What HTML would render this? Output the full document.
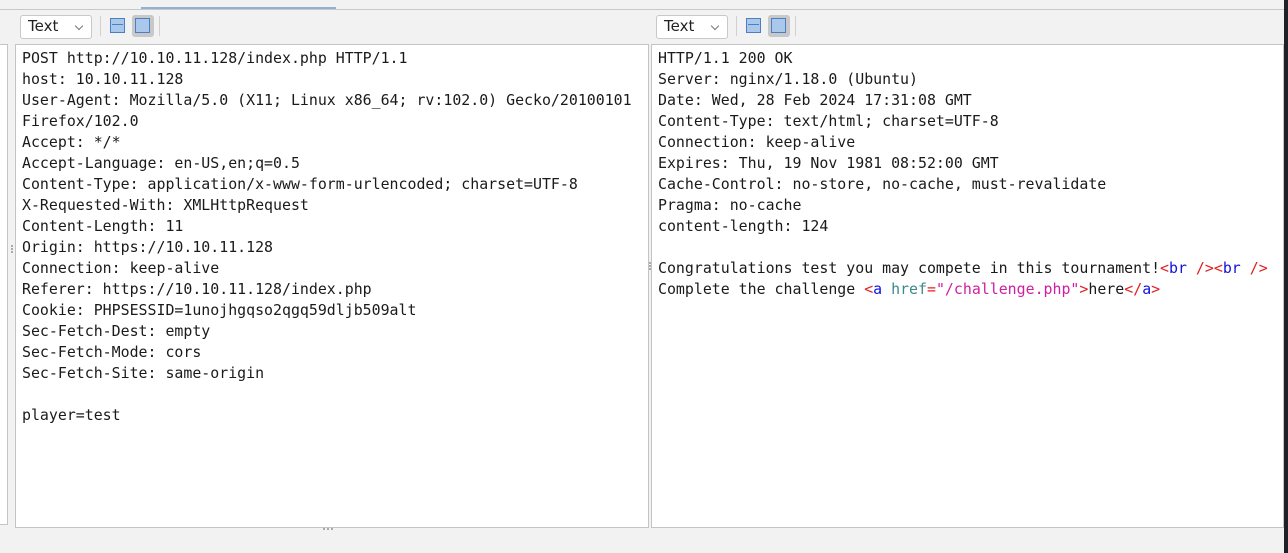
<!DOCTYPE html>
<html><head><style>
body{margin:0;width:1288px;height:553px;background:#f2f2f2;position:relative;overflow:hidden;font-family:"DejaVu Sans Mono","Liberation Mono",monospace;}
.abs{position:absolute}
.ed{position:absolute;top:44px;background:#fff;border:1px solid #c4c4c4;box-sizing:border-box}
pre{margin:0;font-family:"DejaVu Sans Mono","Liberation Mono",monospace;font-size:14.9px;line-height:21px;color:#1a1a1a;position:absolute;top:48px}
.sel{position:absolute;top:15px;width:72px;height:24px;background:#fff;border:1px solid #c8c8c8;border-radius:3px;box-sizing:border-box;font-family:"DejaVu Sans","Liberation Sans",sans-serif;font-size:15px;color:#222;padding:1px 0 0 7px}
.sel:after{content:"";position:absolute;right:9px;top:7px;width:5px;height:5px;border-right:1px solid #777;border-bottom:1px solid #777;transform:rotate(45deg)}
.sep{position:absolute;top:16px;width:1px;height:20px;background:#d0d0d0}
.ic{position:absolute;top:18px;width:15px;height:15px;border:1px solid #4a7fc0;background:#a9c8ec;box-sizing:border-box}
.hl{position:absolute;top:15px;width:22px;height:22px;background:#c8c8c8;border-radius:3px}
.t{color:#e02020}.n{color:#1010e0}.a{color:#3a8a8a}.v{color:#d020a0}
.dots{position:absolute;width:2px;height:2px;background:#aaa;box-shadow:0 3px 0 #aaa,0 6px 0 #aaa}
</style></head><body>
<div class="abs" style="left:0;top:9px;width:1284px;height:1px;background:#c8c8c8"></div>
<div class="abs" style="left:141px;top:7px;width:195px;height:2px;background:#8fb2d8"></div>
<div class="abs" style="left:1284px;top:0;width:4px;height:553px;background:#1e2127"></div>

<div class="sel" style="left:20px">Text</div>
<div class="sep" style="left:100px"></div>
<div class="ic" style="left:110px"><div style="position:absolute;left:1px;right:1px;top:5px;height:1px;background:#4a7fc0"></div></div>
<div class="hl" style="left:132px"></div>
<div class="ic" style="left:135px"></div>
<div class="sep" style="left:159px"></div>

<div class="sel" style="left:656px">Text</div>
<div class="sep" style="left:736px"></div>
<div class="ic" style="left:746px"><div style="position:absolute;left:1px;right:1px;top:5px;height:1px;background:#4a7fc0"></div></div>
<div class="hl" style="left:768px"></div>
<div class="ic" style="left:771px"></div>
<div class="sep" style="left:795px"></div>

<div class="ed" style="left:-2px;width:10px;height:481px"></div>
<div class="ed" style="left:15px;width:634px;height:484px"></div>
<div class="ed" style="left:651px;width:633px;height:484px"></div>
<div class="dots" style="left:11px;top:245px"></div>
<div class="dots" style="left:649px;top:262px"></div>
<div class="abs" style="left:323px;top:528px;width:2px;height:2px;background:#aaa;box-shadow:4px 0 0 #aaa,8px 0 0 #aaa"></div>

<pre style="left:22px">POST http://10.10.11.128/index.php HTTP/1.1
host: 10.10.11.128
User-Agent: Mozilla/5.0 (X11; Linux x86_64; rv:102.0) Gecko/20100101
Firefox/102.0
Accept: */*
Accept-Language: en-US,en;q=0.5
Content-Type: application/x-www-form-urlencoded; charset=UTF-8
X-Requested-With: XMLHttpRequest
Content-Length: 11
Origin: https://10.10.11.128
Connection: keep-alive
Referer: https://10.10.11.128/index.php
Cookie: PHPSESSID=1unojhgqso2qgq59dljb509alt
Sec-Fetch-Dest: empty
Sec-Fetch-Mode: cors
Sec-Fetch-Site: same-origin

player=test</pre>
<pre style="left:658px">HTTP/1.1 200 OK
Server: nginx/1.18.0 (Ubuntu)
Date: Wed, 28 Feb 2024 17:31:08 GMT
Content-Type: text/html; charset=UTF-8
Connection: keep-alive
Expires: Thu, 19 Nov 1981 08:52:00 GMT
Cache-Control: no-store, no-cache, must-revalidate
Pragma: no-cache
content-length: 124

Congratulations test you may compete in this tournament!<span class="t">&lt;</span><span class="n">br</span> <span class="t">/&gt;&lt;</span><span class="n">br</span> <span class="t">/&gt;</span>
Complete the challenge <span class="t">&lt;</span><span class="n">a</span> <span class="a">href</span><span class="t">=</span><span class="v">"/challenge.php"</span><span class="t">&gt;</span>here<span class="t">&lt;/</span><span class="n">a</span><span class="t">&gt;</span></pre>
</body></html>
